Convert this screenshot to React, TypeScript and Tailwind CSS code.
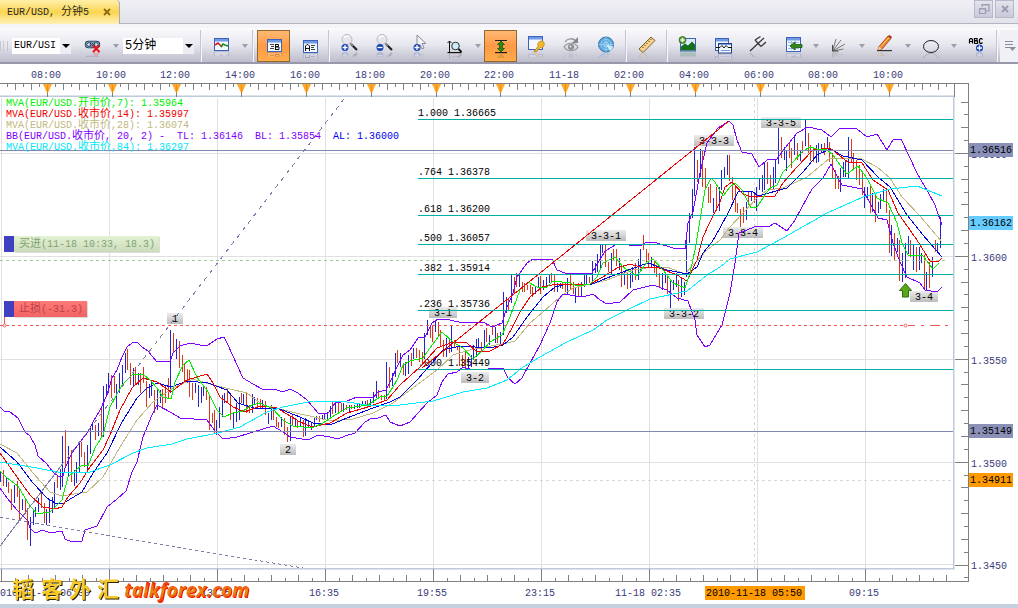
import type { ReactNode } from "react";

const MONO = "font-['Liberation_Mono','Noto_Sans_CJK_SC',monospace]";

/* ------------------------------------------------------------------ */
/* Toolbar                                                             */
/* ------------------------------------------------------------------ */

function Glyph({ id, base, children }: { id: string; base: number; children: ReactNode }) {
  return (
    <svg viewBox="0 0 24 28" className="h-7 w-6" fill="none" aria-hidden="true">
      <defs>
        <g id={`g-${id}`}>{children}</g>
        <clipPath id={`c-${id}`}>
          <rect x="0" y={base} width="24" height="5" />
        </clipPath>
      </defs>
      <use href={`#g-${id}`} />
      <g clipPath={`url(#c-${id})`} opacity="0.18">
        <use href={`#g-${id}`} transform={`translate(0 ${base * 2}) scale(1 -1)`} />
      </g>
    </svg>
  );
}

function Tool({ label, active, children }: { label: string; active?: boolean; children: ReactNode }) {
  return (
    <button type="button" aria-label={label} aria-pressed={active} className="flex h-8 w-[35px] shrink-0 justify-center">
      <span
        className={
          active
            ? "flex h-8 w-[33px] items-center justify-center border border-[#8f6a2c] bg-linear-to-b from-[#ffb873] via-[#ff9a45] to-[#ffab4c]"
            : "flex h-8 w-[33px] items-center justify-center"
        }
      >
        {children}
      </span>
    </button>
  );
}

function Caret({ label }: { label: string }) {
  return (
    <button type="button" aria-label={label} className="flex h-8 w-[11px] shrink-0 items-center justify-center">
      <svg viewBox="0 0 6 4" className="h-1 w-1.5" aria-hidden="true">
        <path d="M0 0h6L3 4z" fill="#9c9cb0" />
      </svg>
    </button>
  );
}

function Sep() {
  return <span className="mx-0.5 h-8 w-0.5 shrink-0 border-l border-[#c4c4d2] bg-[#f7f7fb]" />;
}

function Picker({ label, value, width, size }: { label: string; value: string; width: string; size: string }) {
  return (
    <label className={`relative flex h-4 shrink-0 bg-white ${width}`}>
      <span className="sr-only">{label}</span>
      <select
        defaultValue={value}
        className={`h-4 w-full appearance-none bg-transparent pl-0.5 leading-4 text-black outline-none ${size} ${MONO}`}
      >
        <option>{value}</option>
      </select>
      <span className="pointer-events-none absolute inset-y-0 right-0 flex w-[11px] items-center justify-center bg-[#ececf3]">
        <svg viewBox="0 0 8 4" className="h-1 w-2" aria-hidden="true">
          <path d="M0 0h8L4 4z" fill="#000" />
        </svg>
      </span>
    </label>
  );
}

function Magnifier({ plus }: { plus: boolean }) {
  return (
    <>
      <circle cx="9" cy="7.5" r="5" fill="#e6e6ea" stroke="#b9b9c0" />
      <path d="M6 6a4 4 0 0 1 5-1.500" stroke="#fff" strokeWidth="1.500" />
      <path d="M13 12l6 6" stroke="#222" strokeWidth="2.200" />
      <path d="M12 11l3 3" stroke="#999" strokeWidth="1.200" />
      <circle cx="7" cy="15.500" r="3.500" fill="#1746b0" />
      <path d={plus ? "M4.500 15.500h5M7 13v5" : "M4.500 15.500h5"} stroke="#fff" strokeWidth="1.300" />
    </>
  );
}

function WindowFrame({ x = 4, y = 6, w = 15, h = 13 }: { x?: number; y?: number; w?: number; h?: number }) {
  return (
    <>
      <rect x={x + 0.5} y={y + 0.5} width={w - 1} height={h - 1} fill="#f4f8ff" stroke="#3b62b8" />
      <rect x={x + 1} y={y + 1} width={w - 2} height="2.500" fill="#6f9be6" />
    </>
  );
}

function Toolbar() {
  return (
    <div
      role="toolbar"
      aria-label="图表工具"
      className="flex h-9 items-center overflow-hidden border-b-2 border-[#9898aa] bg-linear-to-b from-[#fbfbfd] via-[#e6e6ee] to-[#bdbccb] pt-0.5"
    >
      <span className="flex w-2 shrink-0 gap-0.5 border-r border-[#c4c4d2]">
        <span className="h-2.5 w-px bg-[#c8c8d4]" />
        <span className="h-2.5 w-px bg-[#c8c8d4]" />
      </span>
      <span className="w-1 shrink-0" />
      <Picker label="品种" value="EUR/USI" width="w-[59px]" size="text-[10px]" />
      <span className="w-1 shrink-0" />
      <Tool label="取消链接">
        <Glyph id="link" base={20}>
          <rect x="5" y="10" width="8" height="5" rx="2.500" stroke="#16324f" strokeWidth="2.400" />
          <rect x="10" y="10" width="8" height="5" rx="2.500" stroke="#16324f" strokeWidth="2.400" />
          <rect x="5" y="10" width="8" height="5" rx="2.500" stroke="#8fb3cf" />
          <rect x="10" y="10" width="8" height="5" rx="2.500" stroke="#8fb3cf" />
          <path d="M12 13.500l6.500 6.500M18.500 13.500L12 20" stroke="#f01010" strokeWidth="1.900" />
        </Glyph>
      </Tool>
      <Caret label="链接选项" />
      <span className="w-0.5 shrink-0" />
      <Picker label="周期" value="5分钟" width="w-[71px]" size="text-[12px]" />
      <span className="w-1 shrink-0" />
      <Sep />
      <Tool label="图表类型">
        <Glyph id="type" base={19}>
          <WindowFrame />
          <path d="M5 13l3-2 2 2 2 2" stroke="#e01818" strokeWidth="1.600" />
          <path d="M11 15l2-3 2 1 3 1" stroke="#189018" strokeWidth="1.600" />
        </Glyph>
      </Tool>
      <Caret label="图表类型选项" />
      <Sep />
      <Tool label="买价" active>
        <Glyph id="bid" base={20}>
          <WindowFrame x={5} y={7} w={15} h={13} />
          <path d="M8 12.500h4M9 14.500h3M8 16.500h4" stroke="#444" />
          <path d="M13.500 12v6M13.500 12.500h3v2h-3M13.500 15h3.500v2.500h-3.500" stroke="#111" />
        </Glyph>
      </Tool>
      <Tool label="卖价">
        <Glyph id="ask" base={21}>
          <WindowFrame x={6} y={8} w={15} h={13} />
          <path d="M8.500 19v-5l1.500-1.500h1l1.500 1.500v5M8.500 16.500h4" stroke="#111" />
          <path d="M14 13.500h4M14 15.500h3M14 17.500h4" stroke="#444" />
        </Glyph>
      </Tool>
      <Sep />
      <Tool label="放大">
        <Glyph id="zin" base={19.5}>
          <Magnifier plus />
        </Glyph>
      </Tool>
      <Tool label="缩小">
        <Glyph id="zout" base={19.5}>
          <Magnifier plus={false} />
        </Glyph>
      </Tool>
      <Tool label="放大选择">
        <Glyph id="zcur" base={19.5}>
          <path d="M9 3v12l3-2.500 2 4.500 2-1-2-4.500h4z" fill="#f3f3f6" stroke="#8a8a92" />
          <circle cx="9" cy="15.500" r="3.500" fill="#1746b0" />
          <path d="M6.500 15.500h5M9 13v5" stroke="#fff" strokeWidth="1.300" />
        </Glyph>
      </Tool>
      <Tool label="坐标缩放">
        <Glyph id="zax" base={21}>
          <path d="M6.500 9v11M4.500 11l2-2 2 2M4.500 20.500h14" stroke="#111" />
          <circle cx="12.500" cy="14" r="3.800" fill="#c9eef8" stroke="#333" />
          <path d="M15.500 17l3 3" stroke="#111" strokeWidth="1.800" />
        </Glyph>
      </Tool>
      <Caret label="坐标缩放选项" />
      <Tool label="自动缩放" active>
        <Glyph id="fit" base={21}>
          <path d="M6 8.500h12M6 20.500h12" stroke="#222" />
          <path d="M12 9l3.500 3.500h-2v4h2L12 20l-3.500-3.500h2v-4h-2z" fill="#2e8a12" stroke="#185808" strokeWidth=".8" />
        </Glyph>
      </Tool>
      <Tool label="图表属性">
        <Glyph id="prop" base={20}>
          <WindowFrame x={4} y={4} w={15} h={14} />
          <path d="M10 19.500l4-5c-1-3 1-5.500 3.500-5.500s3.500 3 2 5.500c-1 1.500-2.500 1.500-3.500 1l-3.500 4z" fill="#f3b92c" stroke="#b97c0c" strokeWidth=".8" />
        </Glyph>
      </Tool>
      <Tool label="显示切换">
        <Glyph id="eye" base={20}>
          <path d="M5 15c3-5 11-5 14 0-3 5-11 5-14 0z" fill="#ddd" stroke="#94949c" strokeWidth="1.200" />
          <circle cx="12" cy="15" r="3" fill="#8c8c94" />
          <circle cx="11.500" cy="14.500" r="1" fill="#eee" />
          <path d="M6 10c2.500-4 8-4 10.500-1.500" stroke="#94949c" strokeWidth="1.300" />
          <path d="M19 5v6h-6z" fill="#85858d" />
        </Glyph>
      </Tool>
      <Tool label="信号">
        <Glyph id="radar" base={20.5}>
          <circle cx="12" cy="12.500" r="7.500" fill="#5aa6dc" stroke="#3478b0" />
          <path d="M12 12.500l7 2a7.500 7.500 0 0 1-3 4.500z" fill="#d6f0ff" />
          <circle cx="12" cy="12.500" r="5" stroke="#a8d4f2" strokeWidth=".8" />
          <circle cx="12" cy="12.500" r="2.500" stroke="#cfe8fa" strokeWidth=".8" />
          <path d="M12 5v15M4.500 12.500h15" stroke="#a8d4f2" strokeWidth=".7" />
        </Glyph>
      </Tool>
      <Sep />
      <Tool label="标尺">
        <Glyph id="ruler" base={20.5}>
          <path d="M4 17L16 5l4 3.500L8 20.500z" fill="#f7d489" stroke="#80602c" />
          <path d="M7 14.500l1.500 1.500M9 12.500l1.500 1.500M11 10.500l1.500 1.500M13 8.500l1.500 1.500M15 6.500l1.500 1.500" stroke="#604818" />
        </Glyph>
      </Tool>
      <Sep />
      <Tool label="添加指标">
        <Glyph id="ind" base={19.5}>
          <rect x="4.500" y="6.500" width="15" height="12.500" fill="#dcecff" stroke="#3b62b8" />
          <path d="M5 18.500v-4l4-3 3 2 4-4 3 3v6z" fill="#16701a" />
          <circle cx="6.500" cy="8" r="3.500" fill="#5da637" stroke="#2f6a18" strokeWidth=".8" />
          <path d="M4.500 8h4M6.500 6v4" stroke="#fff" strokeWidth="1.300" />
        </Glyph>
      </Tool>
      <Tool label="叠加图表">
        <Glyph id="over" base={21.5}>
          <WindowFrame x={4} y={6} w={14} h={13} />
          <rect x="7.500" y="11.500" width="13" height="9.500" fill="#f4f8ff" stroke="#24417c" />
          <path d="M5 15.500h4l2-2 2 2.500 2-2.500 2 2h4" stroke="#111" />
          <path d="M8 12.500h12M10 18.500h9" stroke="#6f9be6" />
        </Glyph>
      </Tool>
      <Tool label="安德鲁音叉">
        <Glyph id="fork" base={20}>
          <path d="M4 19l8-7.500M9 8l6 6.500M9 8l5.500-3.500M12 11.500L18 6M15 14.500L20 10" stroke="#333" strokeWidth="1.200" />
        </Glyph>
      </Tool>
      <Tool label="导出数据">
        <Glyph id="table" base={20.5}>
          <WindowFrame x={5} y={5} w={15} h={15} />
          <path d="M7 10.500h11M7 13.500h11M7 16.500h11M10.500 9v9M14.500 9v9" stroke="#9db9e4" />
          <path d="M21 12.500v3h-7V18l-5-4 5-4v2.500z" fill="#2f8a1a" stroke="#1a5a0c" strokeWidth=".8" />
        </Glyph>
      </Tool>
      <Caret label="导出选项" />
      <Tool label="扇形线">
        <Glyph id="fan" base={20}>
          <path d="M5.500 19L9 7M5.500 19L14 8M5.500 19L18 12M5.500 19l11-2" stroke="#777" />
          <path d="M5.500 13v6h6" stroke="#444" />
        </Glyph>
      </Tool>
      <Caret label="扇形线选项" />
      <Tool label="画线">
        <Glyph id="pen" base={19}>
          <path d="M4 18.500h15" stroke="#333" />
          <path d="M6 14.500L15 4l3 2.500L9 17l-4 1z" fill="#f08428" stroke="#a03c10" strokeWidth=".8" />
          <path d="M5 18l1-3.500L9 17z" fill="#f4d8a0" />
          <path d="M15 4l1.500-1 2.500 2-1 1.500z" fill="#b82010" />
          <path d="M8 14.500l8-9" stroke="#ffd090" />
        </Glyph>
      </Tool>
      <Caret label="画线选项" />
      <Tool label="椭圆">
        <Glyph id="oval" base={21}>
          <ellipse cx="12" cy="14.500" rx="7.500" ry="6" stroke="#222" />
        </Glyph>
      </Tool>
      <Caret label="椭圆选项" />
      <Tool label="文字标签">
        <Glyph id="abc" base={19.5}>
          <path
            d="M4.500 11.500v-4l1-1h1l1 1v4M4.500 9.500h3M9.500 6v5.500M9.500 6.500h2.500v2H9.500M9.500 9h3v2.500h-3M17.500 7.500l-1-1h-1l-1 1v3l1 1h1l1-1"
            stroke="#000"
            strokeWidth="1.200"
          />
          <circle cx="14.500" cy="16" r="3.500" fill="#1746b0" />
          <path d="M12 16h5M14.500 13.500v5" stroke="#fff" strokeWidth="1.300" />
        </Glyph>
      </Tool>
      <Sep />
      <button type="button" aria-label="更多" className="ml-auto flex h-8 w-[19px] shrink-0 items-center justify-center bg-[#f0f0f6]">
        <svg viewBox="0 0 12 12" className="h-3 w-3" fill="none" aria-hidden="true">
          <path d="M1 1.500h8M1 4.500h8M1 7.500h5" stroke="#8c8ca0" />
          <path d="M5 7h7l-3.500 4z" fill="#8c8ca0" />
        </svg>
      </button>
    </div>
  );
}

function TabStrip() {
  return (
    <div className="flex h-6 items-start justify-between border-b border-[#b4b4c2] bg-linear-to-b from-[#efeff5] to-[#e2e2ea]">
      <div className="flex h-6 w-[120px] items-center rounded-tr-sm border-r border-[#a8a8b4] bg-linear-to-b from-[#fff0a8] via-[#fbd54c] to-[#fff0b4] pl-[7px]">
        <span className={`text-[10px] text-[#2a2a2a] ${MONO}`}>
          EUR/USD, <span className="text-[11px]">分钟</span>5
        </span>
        <button type="button" aria-label="关闭" className="ml-auto mr-1.5 flex h-3 w-3 items-center justify-center">
          <svg viewBox="0 0 8 8" className="h-2 w-2" aria-hidden="true">
            <path d="M1 1l6 6M7 1L1 7" stroke="#8a6c14" strokeWidth="1.800" />
          </svg>
        </button>
      </div>
      <div className="flex gap-0.5 pr-1">
        <button type="button" aria-label="还原" className="flex h-[18px] w-[19px] items-center justify-center border border-[#b8b8ca] bg-linear-to-b from-[#e4e4ee] to-[#c8c8d8]">
          <svg viewBox="0 0 12 12" className="h-3 w-3" fill="none" aria-hidden="true">
            <path d="M4 4V1.500h7V8H8M4 2h7" stroke="#9c9cb4" strokeWidth="1.200" />
            <path d="M1.500 5.500h6v5h-6zM1.500 6h6" stroke="#9c9cb4" strokeWidth="1.200" />
          </svg>
        </button>
        <button type="button" aria-label="关闭窗口" className="flex h-[18px] w-[19px] items-center justify-center border border-[#b8b8ca] bg-linear-to-b from-[#e4e4ee] to-[#c8c8d8]">
          <svg viewBox="0 0 8 8" className="h-2 w-2" aria-hidden="true">
            <path d="M1 1l6 6M7 1L1 7" stroke="#9c9cb4" strokeWidth="2" />
          </svg>
        </button>
      </div>
    </div>
  );
}

/* ------------------------------------------------------------------ */
/* Chart data                                                          */
/* ------------------------------------------------------------------ */

type Bar = { x: number; top: number; bottom: number; up: boolean };

// Each record is "<b|r>x,high,low" in thirds of a unit, relative to its block's origin.
const BLOCKS: { x: number; y: number; data: string }[] = [
  {
    x: 0,
    y: 310,
    data: "b2,485,515 r11,480,528 b19,505,530 r26,515,548 r34,538,600 b43,525,580 r51,512,560 r59,535,632 b67,567,600 r75,567,612 r82,595,690 b91,620,708 b99,600,645 b107,590,620 b116,563,605 r124,548,595 r133,580,640 b139,597,645 b148,570,640 b157,560,610 b164,517,590 r173,495,535 b181,478,540 b188,377,530 r196,360,475 b206,408,498 r214,420,515 b222,480,528 b229,457,518 b238,400,485 r245,395,440 r253,425,470 b262,405,490 b270,355,432 b278,335,360 r286,345,390 b295,340,378 r303,295,378 b311,228,380 b319,222,260 b326,190,250 r335,195,265 r343,198,250 b349,222,297 b359,190,250 b368,165,230 b376,130,190 r382,118,180 r392,160,225 b400,173,230 r407,172,225 b415,190,225 r422,188,250 r431,170,220 r438,212,290 b447,222,265 b455,215,258 r464,240,310 b473,238,300 b482,240,280 r488,238,292 r496,225,280 r505,205,265 b512,60,250 r520,70,130 b528,87,148 r538,92,175 r547,135,185 r554,160,215 r562,178,220 r569,180,262 r578,218,270 b587,218,248 b594,225,290 b603,230,280 b611,230,258 r620,230,270 r627,255,360 r636,310,340 r643,300,370 b650,330,375 b658,292,355 b667,255,320 b673,250,280 r682,235,275 r691,250,330 b701,305,355 b709,280,335 b717,262,330 r724,250,280 b731,253,285 r740,245,310 r748,285,310 b757,253,310 b764,262,285 r771,265,290 r780,268,295 b788,270,298 r797,272,315 b806,310,342 b814,285,330 r821,300,330 r830,320,350 r836,335,355 b845,320,350 r854,325,375 r863,350,395 b870,318,392 r878,315,345 b887,325,350 r893,330,355",
  },
  {
    x: 240,
    y: 340,
    data: "b181,230,260 r191,240,290 b197,235,288 b206,240,262 b214,245,270 b222,235,258 b229,228,240 r238,228,245 b247,225,240 b254,220,238 b263,215,237 b271,198,230 r278,182,222 b286,185,218 r295,190,215 r303,190,215 b311,190,215 r320,195,210 b328,195,215 r335,195,208 b343,195,208 b351,192,205 b359,192,205 b368,182,198 b376,182,198 r383,180,200 b392,178,198 b400,155,190 b410,123,175 r416,150,178 r425,165,180 r432,165,180 b439,65,178 r448,80,145 b457,100,138 b466,38,110 r473,30,68 b481,45,75",
  },
  {
    x: 400,
    y: 90,
    data: "b2,790,830 r9,820,855 b16,815,857 b25,795,852 r33,790,828 b41,775,808 r50,773,805 r57,780,815 r67,785,822 b73,730,808 b82,690,735 r91,705,745 r97,705,755 b107,690,725 r115,697,740 r121,720,772 r130,750,800 b138,745,800 r147,748,790 b155,708,785 r164,750,770 r172,770,780 r179,765,828 r187,795,832 r196,780,840 b205,800,838 b213,795,830 b220,765,810 b229,748,800 b236,745,778 r244,755,785 b253,720,775 r260,715,755 b269,735,765 r277,705,735 b285,710,760 r293,730,760 b302,725,765 b310,605,735 b318,622,670 r326,628,660 b335,553,640 r342,560,612 r350,550,590 b358,555,592 r366,575,605 r373,580,605 r382,585,600 r390,585,612 r398,590,620 b407,590,612 b415,560,595 r422,558,612 b430,570,600 b438,560,590 b447,553,580 r455,550,575 r463,555,607 b472,580,605 b481,580,595 r488,575,598 r495,580,605 b503,565,612 r511,550,600 r519,575,612 b527,590,640 r536,580,620 b544,575,618 b553,550,590 b560,548,585 r568,560,580 b577,512,582 b585,520,548 b592,492,545 b602,465,540 b608,463,490 r617,463,530 r624,515,545 b633,490,555 r641,478,510 r649,478,528 b657,505,540 r665,525,590 b673,545,585 r682,545,598 b690,550,595 b697,530,575 r706,520,570 b714,508,570 b722,478,540 r730,435,480 r739,478,520 r746,490,535 b755,500,535 r763,510,550 r770,525,560 r779,550,590 b787,550,600 b796,550,580 r803,562,612 b811,568,655 b820,570,600 b828,550,590 r836,570,632 b845,570,622",
  },
  {
    x: 680,
    y: 90,
    data: "b4,560,620 b12,575,615 b19,445,560 b28,368,460 b37,298,385 b43,170,318 r52,210,275 b62,178,262 r68,180,290 r76,235,300 r85,290,340 r91,282,340 b100,325,368 r108,290,362 b118,290,362 b124,240,300 b133,230,265 b142,195,255 r149,195,272 r157,260,330 r165,292,365 r173,340,370 r181,358,412 r190,350,400 b199,335,390 r205,305,345 b214,305,332 r222,310,340 b230,290,362 b238,265,300 b247,255,305 b254,215,300 r262,215,282 r271,255,298 b280,230,300 b286,210,280 b295,113,222 r304,140,205 b312,172,210 b319,180,242 r328,158,205 r335,175,235 b343,140,195 r352,160,210 b361,182,212 r367,152,190 b376,90,168 r385,128,190 r392,165,212 r400,180,215 b410,165,218 b416,160,215 b425,162,190 r433,160,195 b442,140,175 r448,155,215 r457,190,265 r466,240,298 r474,258,298 b482,235,305 b490,215,262 b497,210,262 b505,140,265 r514,148,220 r521,190,240 r530,210,270 r538,225,285 r547,245,315 b554,290,355 b562,290,325 r571,288,368 b578,310,365 r586,318,395 b595,335,368 b602,312,358 b611,298,330 r619,298,370 r628,360,490 b634,405,498 r643,430,510 b652,445,485 r658,450,572 b667,490,575 b676,460,565 b685,438,492 r691,450,500 b701,465,540 r709,470,545 b717,470,540 b725,490,520 r733,495,600 b740,545,600 r748,515,595 b757,500,562 r766,450,485 b773,460,485 b781,380,475",
  },
];

const BARS: Bar[] = BLOCKS.flatMap((block) =>
  block.data.split(" ").map((rec) => {
    const [x, top, bottom] = rec.slice(1).split(",").map(Number);
    return {
      x: block.x + Math.floor(x / 3),
      top: block.y + Math.round(top / 3),
      bottom: block.y + Math.round(bottom / 3),
      up: rec[0] === "b",
    };
  }),
);

const CURVES: { name: string; color: string; points: string }[] = [
  {
    name: "MVA28",
    color: "#c0b880",
    points:
      "0,444 17,453 33,473 50,492 62,496 87,492 103,477 120,447 137,420 153,402 173,388 193,379 213,385 247,393 263,405 280,409 300,414 310,416 330,421 353,419 373,413 393,403 413,388 437,370 453,355 470,350 507,343 515,341 530,323 543,312 560,297 573,288 607,280 633,270 653,267 667,267 685,274 695,263 707,250 720,240 730,227 743,213 757,198 767,190 783,188 807,177 830,158 862,159 877,167 890,178 902,197 920,216 942,242",
  },
  {
    name: "TL",
    color: "#8000ff",
    points:
      "0,407 4,411 10,412 18,418 25,432 30,436 35,445 38,456 47,464 53,472 58,476 63,476 65,468 72,453 80,442 88,432 93,422 100,410 107,395 112,378 117,370 122,357 127,347 132,343 137,342 142,347 148,351 157,362 163,361 170,362 173,353 180,346 190,343 200,345 208,345 217,339 224,337 228,345 237,365 243,378 253,384 262,389 277,390 283,392 290,389 298,393 307,400 318,413 328,413 332,408 335,403 347,401 357,397 373,398 378,392 386,390 392,378 397,367 403,355 410,350 418,338 425,337 432,323 438,319 450,320 463,323 483,322 492,327 502,323 507,307 513,293 517,277 527,263 533,259 552,259 557,270 565,273 592,273 598,263 605,251 617,244 640,246 647,242 657,243 673,248 685,249 688,223 693,212 700,173 707,143 718,128 729,121 733,125 737,140 742,152 752,154 759,167 767,160 777,159 785,148 797,133 808,127 822,130 831,137 840,128 857,129 867,137 877,134 887,150 893,140 901,139 910,158 917,173 928,192 935,205 942,225",
  },
  {
    name: "BL",
    color: "#8000ff",
    points:
      "0,488 7,498 17,510 28,521 30,528 35,533 43,530 50,533 62,531 65,539 72,542 82,541 85,530 97,526 107,507 117,499 126,491 132,472 137,462 143,437 152,415 157,405 172,413 180,418 207,420 215,431 223,439 237,437 250,433 273,426 283,432 290,437 308,440 318,435 330,437 338,439 345,436 355,433 365,422 372,418 378,418 386,415 390,422 400,426 410,422 427,403 437,395 442,382 448,374 457,372 463,367 473,370 503,368 508,378 515,384 522,378 530,363 540,345 550,323 557,302 563,294 583,297 593,294 600,300 607,304 620,302 633,290 653,285 667,290 677,298 688,301 695,320 697,335 705,347 710,345 716,335 722,325 730,293 735,263 739,233 757,226 768,227 775,223 787,231 795,220 802,207 812,189 823,178 831,164 837,176 842,185 862,189 870,203 878,218 887,220 893,243 900,262 907,277 920,283 925,290 937,292 942,287",
  },
  {
    name: "AL",
    color: "#0000e0",
    points:
      "0,447 17,462 33,483 47,498 55,503 62,504 82,492 93,473 107,453 122,422 137,398 147,388 157,383 171,387 187,381 208,383 227,390 238,403 257,409 277,408 300,417 313,423 330,425 347,418 373,408 390,402 400,397 417,380 432,363 443,350 460,346 490,348 503,345 513,337 527,317 543,297 555,287 567,284 590,285 607,278 620,273 648,263 667,270 687,274 697,267 703,253 712,242 720,228 728,213 738,192 752,191 758,196 787,188 803,172 817,155 830,149 843,156 862,160 878,177 890,187 907,215 923,235 942,257",
  },
  {
    name: "MVA14",
    color: "#f00000",
    points:
      "0,453 17,477 30,495 43,507 55,509 62,507 68,497 80,483 90,467 103,450 110,435 120,410 132,388 143,378 157,382 171,392 187,380 207,374 213,383 220,397 233,407 245,412 260,406 277,408 300,422 312,427 330,423 347,413 368,407 387,400 400,385 420,367 437,348 453,342 467,343 477,352 490,351 503,344 512,328 520,312 530,297 542,287 557,284 590,284 603,277 617,268 630,264 640,267 657,267 677,275 687,281 697,260 703,237 710,222 720,202 725,187 732,182 743,194 752,197 775,196 783,183 797,167 813,150 830,148 840,156 848,162 862,163 873,180 888,190 898,213 917,240 930,261 938,262 942,258",
  },
  {
    name: "MVA7",
    color: "#00f000",
    points:
      "0,471 7,478 18,486 28,503 37,514 50,512 62,500 68,477 82,465 88,466 95,448 103,435 110,407 122,385 133,374 143,374 150,380 157,388 163,397 171,399 175,382 183,365 189,360 197,377 208,392 217,410 224,417 233,413 243,411 252,405 260,403 273,409 283,420 293,426 312,428 323,423 332,417 347,408 368,405 380,397 387,396 393,387 398,378 403,365 410,361 423,358 432,345 442,332 453,342 463,348 473,359 483,350 490,342 502,335 510,317 520,290 528,282 537,287 547,287 553,281 570,283 577,286 590,284 597,277 603,263 615,257 623,267 637,276 647,262 653,259 663,270 673,283 685,288 690,273 695,250 700,220 705,190 711,178 715,182 723,196 730,187 735,183 742,190 747,200 751,208 757,207 763,198 770,188 777,185 783,172 793,162 803,151 810,147 817,149 827,150 833,155 840,165 847,174 858,166 867,178 877,198 888,203 897,223 902,243 908,255 923,256 933,269 939,263",
  },
  {
    name: "MVA84",
    color: "#00f0ff",
    points:
      "0,462 37,468 63,473 90,472 110,465 133,453 147,448 172,444 187,439 218,433 240,427 267,412 283,407 303,403 313,401 347,402 367,405 400,405 433,401 463,392 487,388 507,380 523,367 540,357 567,342 593,330 607,320 627,310 650,299 687,291 707,275 720,267 730,259 757,252 783,238 827,213 863,197 890,189 917,186 942,196",
  },
];

const FIB = [
  { y: 119, text: "1.000 1.36665" },
  { y: 178, text: ".764 1.36378" },
  { y: 215, text: ".618 1.36200" },
  { y: 244, text: ".500 1.36057" },
  { y: 274, text: ".382 1.35914" },
  { y: 310, text: ".236 1.35736" },
  { y: 369, text: ".000 1.35449" },
];

const WAVES = [
  { x: 167, y: 313, w: 16, text: "1" },
  { x: 280, y: 444, w: 16, text: "2" },
  { x: 429, y: 307, w: 28, text: "3-1" },
  { x: 461, y: 372, w: 28, text: "3-2" },
  { x: 586, y: 230, w: 40, text: "3-3-1" },
  { x: 664, y: 308, w: 40, text: "3-3-2" },
  { x: 694, y: 135, w: 40, text: "3-3-3" },
  { x: 723, y: 227, w: 40, text: "3-3-4" },
  { x: 761, y: 117, w: 40, text: "3-3-5" },
  { x: 910, y: 291, w: 28, text: "3-4" },
];

const TOP_HOURS = [
  { x: 47, text: "08:00" },
  { x: 112, text: "10:00" },
  { x: 176, text: "12:00" },
  { x: 241, text: "14:00" },
  { x: 306, text: "16:00" },
  { x: 371, text: "18:00" },
  { x: 436, text: "20:00" },
  { x: 500, text: "22:00" },
  { x: 565, text: "11-18" },
  { x: 630, text: "02:00" },
  { x: 695, text: "04:00" },
  { x: 760, text: "06:00" },
  { x: 824, text: "08:00" },
  { x: 889, text: "10:00" },
];

const BOTTOM_TIMES = [
  { x: 43, text: "2010-11-17 06:30" },
  { x: 217, text: "13:15" },
  { x: 325, text: "16:35" },
  { x: 433, text: "19:55" },
  { x: 541, text: "23:15" },
  { x: 649, text: "11-18 02:35" },
  { x: 865, text: "09:15" },
];

const PRICES = [
  { y: 153, text: "1.3650" },
  { y: 256, text: "1.3600" },
  { y: 359, text: "1.3550" },
  { y: 462, text: "1.3500" },
  { y: 564, text: "1.3450" },
];

const PRICE_TAGS = [
  { y: 143, text: "1.36516", fill: "#8a90b8" },
  { y: 216, text: "1.36162", fill: "#66ccff" },
  { y: 424, text: "1.35149", fill: "#8a90b8" },
  { y: 473, text: "1.34911", fill: "#ff9900" },
];

const GRID_X = [1, 109, 217, 325, 433, 541, 649, 757, 865];

/* ------------------------------------------------------------------ */
/* Chart                                                               */
/* ------------------------------------------------------------------ */

type LabelProps = { x: number; y: number; fill?: string; anchor?: "start" | "middle"; children: string };

function Label({ x, y, fill = "#000", anchor = "start", children }: LabelProps) {
  return (
    <text x={x} y={y} fill={fill} textAnchor={anchor} className="whitespace-pre text-[10px]">
      {children.split(/([\u4e00-\u9fff]+)/).map((part, i) =>
        i % 2 ? (
          <tspan key={i} className="text-[11px]">
            {part}
          </tspan>
        ) : (
          part
        ),
      )}
    </text>
  );
}

function ticks(count: number) {
  return Array.from({ length: count }, (_, i) => i);
}

function Axes() {
  return (
    <>
      <g stroke="none" fill="#808080" shapeRendering="crispEdges">
        <rect x="0" y="83" width="969" height="1" />
        <rect x="968" y="83" width="1" height="499" />
        <rect x="0" y="581" width="969" height="1" />
        <rect x="954" y="84" width="1" height="13" />
        {ticks(118).map((i) => {
          const k = i - 5;
          return k % 8 === 0 ? null : (
            <rect key={i} x={Math.round(47 + k * 8.1)} y="84" width="1" height={k % 2 ? 3 : 6} />
          );
        })}
        {ticks(71).map((k) => {
          const h = k % 8 === 0 ? 12 : k % 2 ? 3 : 6;
          return <rect key={k} x={Math.round(1 + k * 13.5)} y={581 - h} width="1" height={h} />;
        })}
        {ticks(38).map((i) => {
          const k = i - 4;
          const w = k % 8 === 0 ? 13 : k % 2 ? 4 : 7;
          return <rect key={i} x={968 - w} y={Math.round(153 + k * 12.86)} width={w} height="1" />;
        })}
      </g>
      {TOP_HOURS.map((t) => (
        <g key={t.x}>
          <path d={`M${t.x - 4} 84h9l-4.500 10z`} fill="#ffa830" />
          <path d={`M${t.x + 0.5} 85v8`} stroke="#f09000" />
          <path d={`M${t.x + 0.5} 93v4`} stroke="#808080" />
          <Label x={t.x - 1} y={78} anchor="middle" fill="#3a3a7a">
            {t.text}
          </Label>
        </g>
      ))}
      {BOTTOM_TIMES.map((t) => (
        <Label key={t.x} x={t.x - 1} y={596} anchor="middle" fill="#3a3a7a">
          {t.text}
        </Label>
      ))}
      {PRICES.map((p) => (
        <Label key={p.y} x={971} y={p.y + 5} fill="#3a3a7a">
          {p.text}
        </Label>
      ))}
      {PRICE_TAGS.map((p) => (
        <g key={p.y}>
          <rect x="969" y={p.y} width="44" height="14" fill={p.fill} />
          <Label x={970} y={p.y + 10}>
            {p.text}
          </Label>
        </g>
      ))}
      <rect x="705" y="586" width="100" height="14" fill="#ff9900" />
      <Label x={706} y={596}>
        2010-11-18 05:50
      </Label>
    </>
  );
}

function Plot() {
  return (
    <>
      <g fill="#e0e0e0" shapeRendering="crispEdges">
        {GRID_X.map((x) => (
          <rect key={x} x={x} y="98" width="1" height="470" />
        ))}
        {PRICES.map((p) => (
          <rect key={p.y} x="0" y={p.y} width="953" height="1" />
        ))}
        <path d="M754.500 98v470M0 480.500h953" stroke="#d8d8d8" strokeDasharray="3 3" />
        <rect x="0" y="95" width="955" height="1" fill="#dde4ec" />
        <rect x="0" y="96" width="955" height="1" fill="#bccadb" />
        <rect x="953" y="96" width="1" height="473" fill="#bccadb" />
        <rect x="954" y="96" width="1" height="474" fill="#dde4ec" />
        <rect x="0" y="568" width="954" height="1" fill="#bccadb" />
        <rect x="0" y="569" width="955" height="1" fill="#dde4ec" />
      </g>

      <g shapeRendering="crispEdges">
        {BARS.map((b, i) => (
          <rect key={i} x={b.x} y={b.top} width="1" height={b.bottom - b.top} fill={b.up ? "#2424cc" : "#dc3818"} />
        ))}
      </g>
      <path d="M905.500 283.500l6 7h-3v6.500h-6v-6.500h-3z" fill="#58a818" stroke="#2c6c0c" />

      {WAVES.map((w) => (
        <g key={w.text}>
          <rect x={w.x} y={w.y} width={w.w} height="11" fill="url(#wave)" />
          <Label x={w.x + w.w / 2} y={w.y + 9} anchor="middle">
            {w.text}
          </Label>
        </g>
      ))}
      {FIB.map((f) => (
        <Label key={f.y} x={418} y={f.y - 3}>
          {f.text}
        </Label>
      ))}

      <g fill="none" shapeRendering="crispEdges">
        {CURVES.map((c) => (
          <polyline key={c.name} points={c.points} stroke={c.color} />
        ))}
        <path d="M422 368L729 121" stroke="#f00000" />
        <path d="M344 99L64 462" stroke="#7c7caa" strokeDasharray="4 5" />
        <path d="M64 462L0 546" stroke="#7c7caa" />
        <path d="M0 517.500L303 568" stroke="#7c7caa" strokeDasharray="3 3" />
        <path d="M0 260.500h948" stroke="#a8cc90" strokeDasharray="3 3" />
        <path d="M0 325.500h903" stroke="#f05858" strokeDasharray="3 3" />
        <path d="M908 325.500h7M921 325.500h3M930 325.500h10M945 325.500h3" stroke="#f05858" />
        <path d="M0 150.500h953M0 431.500h953" stroke="#8088b4" />
        <path d={FIB.map((f) => `M418 ${f.y + 0.5}h535`).join("")} stroke="#00b0a8" />
      </g>
      <g fill="#fff" stroke="#f06060">
        <path d="M4.500 317v7" />
        <circle cx="4.500" cy="325.500" r="1.500" />
        <circle cx="905.500" cy="325.500" r="1.500" />
      </g>

      <Label x={6} y={106} fill="#00f000">MVA(EUR/USD.开市价,7): 1.35964</Label>
      <Label x={6} y={117} fill="#f00000">MVA(EUR/USD.收市价,14): 1.35997</Label>
      <Label x={6} y={128} fill="#c0b880">MVA(EUR/USD.收市价,28): 1.36074</Label>
      <Label x={6} y={139} fill="#8000ff">BB(EUR/USD.收市价, 20, 2) -  TL: 1.36146  BL: 1.35854</Label>
      <Label x={333} y={139} fill="#0000f0">AL: 1.36000</Label>
      <Label x={6} y={150} fill="#00e8f8">MVA(EUR/USD.收市价,84): 1.36297</Label>

      <rect x="15" y="237" width="145" height="16" fill="#dcdcdc" />
      <rect x="4" y="236" width="10" height="16" fill="#4040c0" />
      <rect x="14" y="236" width="145" height="16" fill="url(#buy)" />
      <Label x={19} y={247} fill="#80a474">买进(11-18 10:33, 18.3)</Label>
      <rect x="15" y="302" width="73" height="16" fill="#dcdcdc" />
      <rect x="4" y="301" width="10" height="16" fill="#4040c0" />
      <rect x="14" y="301" width="73" height="16" fill="url(#stop)" />
      <Label x={19} y={312} fill="#bc4444">止损(-31.3)</Label>
    </>
  );
}

const BRAND_GLYPHS = [
  { x: 12, ch: "韬" },
  { x: 41, ch: "客" },
  { x: 69, ch: "外" },
  { x: 97, ch: "汇" },
];

function Watermark() {
  return (
    <g>
      <g className="font-['Noto_Sans_CJK_SC',sans-serif] text-[22px] font-bold drop-shadow-[1px_1px_0_#2c2408]" fill="#f8c828">
        {BRAND_GLYPHS.map((g) => (
          <text key={g.ch} x={g.x} y="597">
            {g.ch}
          </text>
        ))}
      </g>
      <text
        x="124"
        y="597"
        fill="url(#brand)"
        className="font-['Open_Sans',sans-serif] text-[19px] font-bold italic drop-shadow-[1px_1px_0_#f01800]"
      >
        talkforex.com
      </text>
    </g>
  );
}

function Chart() {
  return (
    <svg viewBox="0 64 1018 540" className={`block w-full ${MONO}`} role="img" aria-label="EUR/USD 5分钟">
      <defs>
        <linearGradient id="wave" x1="0" y1="0" x2="0" y2="1">
          <stop offset="0" stopColor="#ececec" />
          <stop offset="1" stopColor="#bcbcbc" />
        </linearGradient>
        <linearGradient id="buy" x1="0" y1="0" x2="0" y2="1">
          <stop offset="0" stopColor="#e4f2d4" />
          <stop offset="1" stopColor="#ccdabc" />
        </linearGradient>
        <linearGradient id="stop" x1="0" y1="0" x2="0" y2="1">
          <stop offset="0" stopColor="#ff7878" />
          <stop offset="1" stopColor="#f06464" />
        </linearGradient>
        <linearGradient id="brand" x1="0" y1="0" x2="0" y2="1">
          <stop offset="0.2" stopColor="#f4300c" />
          <stop offset="0.55" stopColor="#e89010" />
          <stop offset="0.9" stopColor="#f04008" />
        </linearGradient>
      </defs>
      <Plot />
      <Axes />
      <Watermark />
    </svg>
  );
}

export default function App() {
  return (
    <div className="flex min-h-screen flex-col bg-[#c5d0df]">
      <TabStrip />
      <div className="bg-[#f4f4f9] pt-1">
        <Toolbar />
      </div>
      <main className="bg-white">
        <Chart />
      </main>
    </div>
  );
}
